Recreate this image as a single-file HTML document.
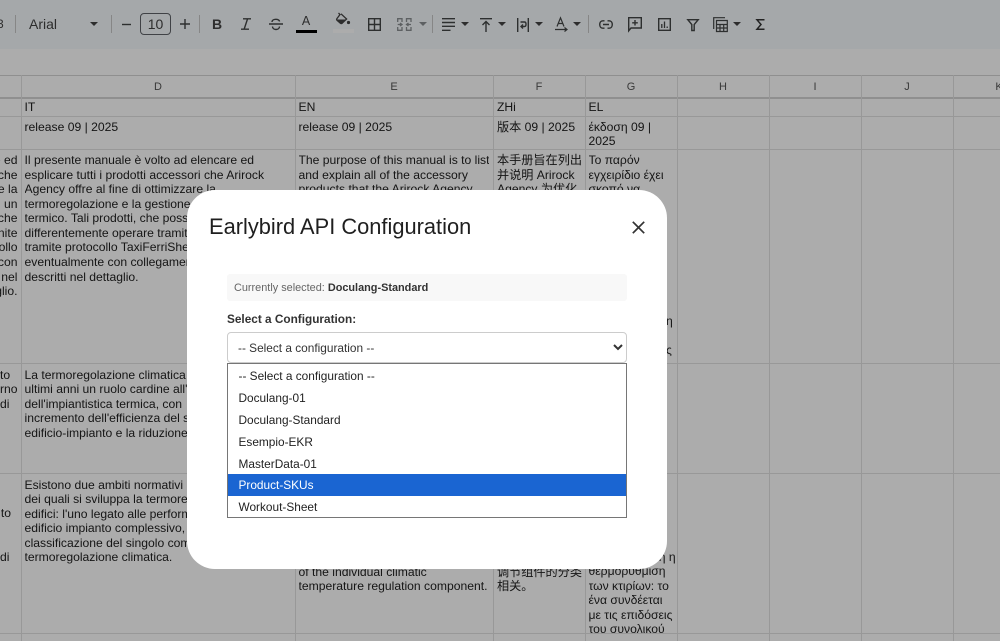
<!DOCTYPE html>
<html><head><meta charset="utf-8"><title>Earlybird API Configuration</title>
<style>
*{box-sizing:border-box}
html,body{margin:0;padding:0;width:1000px;height:641px;overflow:hidden;background:#fff;font-family:"Liberation Sans","Noto Sans CJK SC",sans-serif}
#wrap{position:absolute;left:0;top:0;width:1000px;height:641px;overflow:hidden;filter:blur(.3px)}
#sheet{position:absolute;left:0;top:0;width:1000px;height:641px;overflow:hidden;background:#fff}
#tb{position:absolute;left:0;top:0;width:1000px;height:49px;background:#f5f9fc}
.sep{position:absolute;top:15px;width:1px;height:18px;background:#c7c7c7}
.hl{position:absolute;left:0;width:1000px;height:1px;background:#e1e1e1}
.vl{position:absolute;top:75px;width:1px;height:566px;background:#e1e1e1}
.col{position:absolute;top:80px;width:20px;margin-left:-10px;text-align:center;font-size:11px;line-height:14px;color:#555}
.c{position:absolute;font-size:12.15px;line-height:14.57px;color:#222;white-space:nowrap;overflow:hidden}
.r{position:absolute;font-size:12.15px;line-height:14.57px;color:#222;white-space:nowrap;text-align:right;left:0}
#ov{position:absolute;left:0;top:0;width:1000px;height:641px;background:rgba(0,0,0,.325)}
#modal{position:absolute;left:186.5px;top:190px;width:480.5px;height:379px;background:#fff;border-radius:28px}
#title{position:absolute;left:22.5px;top:23px;font-size:21.85px;line-height:28px;color:#1f1f1f;white-space:nowrap}
#info{position:absolute;left:40.5px;top:84px;width:400px;height:27px;background:#f8f8f8;border-radius:3px;font-size:10.9px;line-height:28px;padding-left:7px;color:#666}
#info b{color:#333}
#lab{position:absolute;left:40.5px;top:122px;font-size:11.8px;line-height:15px;font-weight:bold;color:#333}
#sel{position:absolute;left:40.5px;top:142px;width:400px;height:31px;border:1px solid #ccc;border-radius:4px;background:#fff;font:11.85px "Liberation Sans",sans-serif;color:#333;padding:0 6px}
#list{position:absolute;left:40.5px;top:173px;width:400px;height:155px;border:1px solid #767676;background:#fff;padding-top:1px}
#list div{height:21.9px;line-height:22.9px;font-size:11.85px;padding-left:10.5px;color:#222;white-space:nowrap}
#list div.s{background:#1a65d2;color:#fff}
svg{position:absolute;overflow:visible}
svg.i{fill:none;stroke:#444746;stroke-width:1.4}
</style></head><body>
<div id="wrap">
<div id="sheet">
<div id="tb">
<div style="position:absolute;left:-3px;top:16px;font-size:12px;line-height:16px;color:#444">3</div>
<div class="sep" style="left:15px"></div>
<div style="position:absolute;left:29px;top:15px;font-size:14px;line-height:18px;color:#444">Arial</div>
<svg style="left:90px;top:22px" width="8" height="4"><path d="M0 0H8L4 4Z" fill="#444"/></svg>
<div class="sep" style="left:111px"></div>
<svg class="i" style="left:122px;top:24px" width="10" height="2"><path d="M0 .5H9"/></svg>
<div style="position:absolute;left:140px;top:13px;width:31px;height:22px;border:1px solid #5f6368;border-radius:4px;text-align:center;font-size:14px;line-height:20px;color:#444">10</div>
<svg class="i" style="left:179.500px;top:19px" width="11" height="11"><path d="M0 5H10M5 0V10"/></svg>
<div class="sep" style="left:199px"></div>
<div style="position:absolute;left:211px;top:15px;width:12px;font-size:14px;line-height:18px;font-weight:bold;color:#444;text-align:center">B</div>
<svg class="i" style="left:240px;top:18px" width="12" height="13"><path d="M3 .8H11M1 11.2H9M7.5 1 4.2 11" /></svg>
<svg class="i" style="left:269px;top:18px" width="14" height="13"><path d="M0 6H14M3 4C3 .5 10.5 .5 10.5 3.5M3.5 8.5C3.5 12.5 10.5 12.5 10.5 8.5"/></svg>
<div style="position:absolute;left:296px;top:13px;width:20px;text-align:center;font-size:12.5px;line-height:17px;color:#444">A</div>
<div style="position:absolute;left:296px;top:30px;width:21px;height:3px;background:#000"></div>
<svg style="left:336px;top:13px" width="15" height="13"><path d="M2.5 0 4 1.5 1 5.5C.5 6.2.5 6.8 1 7.3L4.4 10.2C5 10.7 5.6 10.7 6.2 10.2L10.6 6 5 .8" fill="none" stroke="#444" stroke-width="1.3"/><path d="M1 6.5H10L6 10.4 4.4 10.4Z" fill="#444"/><circle cx="12.5" cy="9.5" r="1.6" fill="#444"/></svg>
<div style="position:absolute;left:333px;top:29px;width:21px;height:4px;background:#fff"></div>
<svg class="i" style="left:368px;top:18px" width="13" height="13"><path d="M.7.7H12.3V12.3H.7ZM.7 6.5H12.3M6.5.7V12.3"/></svg>
<svg style="left:397px;top:18px;fill:none;stroke:#8b8f92;stroke-width:1.3" width="15" height="13"><path d="M.7 4V.7H5V4M.7 9V12.3H5V9M9.5 4V.7H14V4M9.5 9V12.3H14V9M.7 6.5H4M3 5 5 6.5 3 8M14 6.5H10.500M11.500 5 9.500 6.500 11.500 8"/></svg>
<svg style="left:419px;top:22px" width="8" height="4"><path d="M0 0H8L4 4Z" fill="#8b8f92"/></svg>
<div class="sep" style="left:432px"></div>
<svg class="i" style="left:442px;top:18px" width="13" height="13"><path d="M0 .7H13M0 4.500H13M0 8.300H13M0 12.300H8.500"/></svg>
<svg style="left:461px;top:22px" width="8" height="4"><path d="M0 0H8L4 4Z" fill="#444"/></svg>
<svg class="i" style="left:480px;top:18px" width="12" height="14"><path d="M0 .7H12M6 14V4M2.500 7 6 3.500 9.500 7"/></svg>
<svg style="left:498px;top:22px" width="8" height="4"><path d="M0 0H8L4 4Z" fill="#444"/></svg>
<svg class="i" style="left:517px;top:18px" width="12" height="14" ><path d="M.7 0V14M11.300 0V14M3.500 4H7.500C9.500 4 9.500 8.500 7.500 8.500H4.500M6 6.500 4 8.500 6 10.500"/></svg>
<svg style="left:535px;top:22px" width="8" height="4"><path d="M0 0H8L4 4Z" fill="#444"/></svg>
<svg class="i" style="left:555px;top:17px;stroke-width:1.200" width="13" height="15"><path d="M2 9.500 5.500 .8 9 9.500M3.200 6.500H7.800M0 12.500H11.500M9.500 10.500 12 12.500 9.500 14.500"/></svg>
<svg style="left:573px;top:22px" width="8" height="4"><path d="M0 0H8L4 4Z" fill="#444"/></svg>
<div class="sep" style="left:588px"></div>
<svg class="i" style="left:599px;top:20px;stroke-width:1.400" width="14" height="9"><path d="M5.500 .8H3.800C-.300 .8-.300 8.200 3.800 8.200H5.500M8.500 .8H10.200C14.300 .8 14.300 8.200 10.200 8.200H8.500M4 4.500H10"/></svg>
<svg class="i" style="left:628px;top:17px" width="14" height="15"><path d="M.7 .7H13.300V11H3L.7 13.800ZM7 3V8.500M4.200 5.800H9.800"/></svg>
<svg class="i" style="left:658px;top:18px" width="13" height="13"><path d="M.7 .7H12.300V12.300H.7Z"/><path d="M3.800 6V10M6.500 3.500V10M9.200 8.500V10" stroke-width="1.300"/></svg>
<svg class="i" style="left:687px;top:19px" width="12" height="12"><path d="M.8 .7H11.200L7.200 5.500V11.500H4.800V5.500Z"/></svg>
<svg class="i" style="left:713px;top:17px;stroke-width:1.200" width="15" height="15"><path d="M.7 12V.7H12"/><path d="M3.500 3.500H14.300V14.500H3.500Z"/><path d="M3.500 7.500H14.300M3.500 11H14.300M7 7.500V14.500M10.700 7.500V14.500" /></svg>
<svg style="left:733px;top:22px" width="8" height="4"><path d="M0 0H8L4 4Z" fill="#444"/></svg>
<svg class="i" style="left:756px;top:19px;stroke:#333;stroke-width:1.500" width="9" height="11"><path d="M8.500 .8H1L5 5.500 1 10.200H8.500"/></svg>
</div>

<div class="hl" style="top:75px;background:#d4d4d4"></div>
<div class="hl" style="top:97px;background:#d4d4d4;height:2px"></div>
<div class="hl" style="top:116px"></div>
<div class="hl" style="top:149px"></div>
<div class="hl" style="top:363px"></div>
<div class="hl" style="top:473px"></div>
<div class="hl" style="top:633px"></div>
<div class="vl" style="left:21px"></div>
<div class="vl" style="left:295px"></div>
<div class="vl" style="left:493px"></div>
<div class="vl" style="left:585px"></div>
<div class="vl" style="left:677px"></div>
<div class="vl" style="left:769px"></div>
<div class="vl" style="left:861px"></div>
<div class="vl" style="left:953px"></div>

<div class="col" style="left:158px">D</div>
<div class="col" style="left:394px">E</div>
<div class="col" style="left:539px">F</div>
<div class="col" style="left:631px">G</div>
<div class="col" style="left:723px">H</div>
<div class="col" style="left:815px">I</div>
<div class="col" style="left:907px">J</div>
<div class="col" style="left:999px">K</div>

<div class="c" style="left:24.500px;top:100px">IT</div>
<div class="c" style="left:298.500px;top:100px">EN</div>
<div class="c" style="left:497px;top:100px">ZHi</div>
<div class="c" style="left:588.500px;top:100px">EL</div>

<div class="c" style="left:24.500px;top:119.500px">release 09 | 2025</div>
<div class="c" style="left:298.500px;top:119.500px">release 09 | 2025</div>
<div class="c" style="left:497px;top:119.500px">版本 09 | 2025</div>
<div class="c" style="left:588.500px;top:119.500px">έκδοση 09 |<br>2025</div>

<div class="r" style="top:153px;width:17.5px;direction:rtl"><bdi>e ed</bdi><br><bdi>che</bdi><br><bdi>e la</bdi><br><bdi>i un</bdi><br><bdi>che</bdi><br><bdi>nite</bdi><br><bdi>ollo</bdi><br><bdi>con</bdi><br><bdi>nel</bdi><br><bdi>glio.</bdi></div>
<div class="c" style="left:24.500px;top:153px">Il presente manuale è volto ad elencare ed<br>esplicare tutti i prodotti accessori che Arirock<br>Agency offre al fine di ottimizzare la<br>termoregolazione e la gestione del sistema<br>termico. Tali prodotti, che possono<br>differentemente operare tramite<br>tramite protocollo TaxiFerriShell<br>eventualmente con collegamenti<br>descritti nel dettaglio.</div>
<div class="c" style="left:298.500px;top:153px">The purpose of this manual is to list<br>and explain all of the accessory<br>products that the Arirock Agency</div>
<div class="c" style="left:497px;top:153px">本手册旨在列出<br>并说明 Arirock<br>Agency 为优化</div>
<div class="c" style="left:588.500px;top:153px">Το παρόν<br>εγχειρίδιο έχει<br>σκοπό να</div>
<div class="c" style="left:666px;top:314px">η</div>
<div class="c" style="left:666px;top:343px">ς</div>

<div class="r" style="top:367.500px;width:9px">to</div>
<div class="r" style="top:382.100px;width:14.500px">rno</div>
<div class="r" style="top:396.700px;width:8px">di</div>
<div class="c" style="left:24.500px;top:367.500px">La termoregolazione climatica ha assunto<br>ultimi anni un ruolo cardine all'interno<br>dell'impiantistica termica, con<br>incremento dell'efficienza del sistema<br>edificio-impianto e la riduzione</div>

<div class="r" style="top:506px;width:11px">to</div>
<div class="r" style="top:550px;width:8px">di</div>
<div class="c" style="left:24.500px;top:477.500px">Esistono due ambiti normativi<br>dei quali si sviluppa la termoregolazione<br>edifici: l'uno legato alle performance<br>edificio impianto complessivo,<br>classificazione del singolo componente<br>termoregolazione climatica.</div>
<div class="c" style="left:298.500px;top:564.500px">of the individual climatic<br>temperature regulation component.</div>
<div class="c" style="left:497px;top:564.500px">调节组件的分类<br>相关。</div>
<div class="c" style="left:588.500px;top:549.500px;height:83.500px">θερμορύθμιση η<br>θερμορυθμιση<br>των κτιρίων: το<br>ένα συνδέεται<br>με τις επιδόσεις<br>του συνολικού</div>
</div>
<div id="ov"></div>
<div id="modal">
<div id="title">Earlybird API Configuration</div>
<svg style="left:445px;top:30.500px" width="13" height="13"><path d="M.8.800 12.200 12.200M12.200.800.800 12.200" fill="none" stroke="#333" stroke-width="1.700"/></svg>
<div id="info">Currently selected: <b>Doculang-Standard</b></div>
<div id="lab">Select a Configuration:</div>
<select id="sel"><option>-- Select a configuration --</option></select>
<div id="list">
<div>-- Select a configuration --</div>
<div>Doculang-01</div>
<div>Doculang-Standard</div>
<div>Esempio-EKR</div>
<div>MasterData-01</div>
<div class="s">Product-SKUs</div>
<div>Workout-Sheet</div>
</div>
</div>
</div>
</body></html>
